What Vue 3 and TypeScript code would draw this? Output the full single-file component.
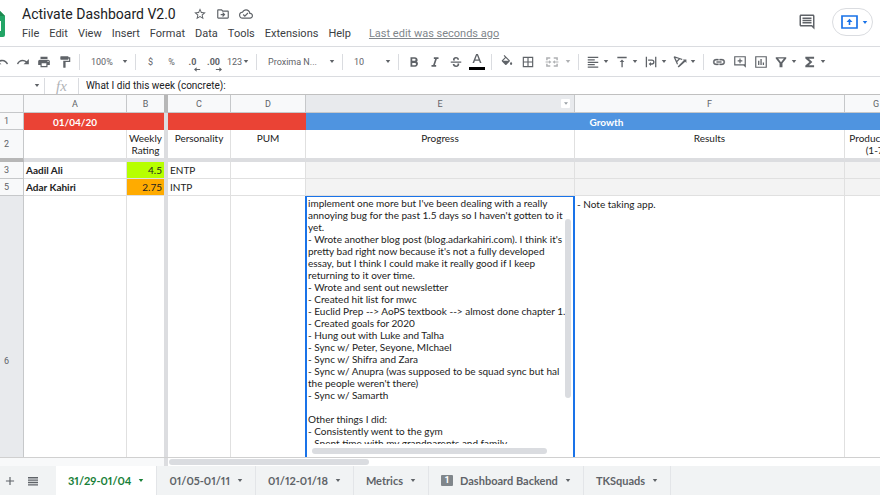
<script setup lang="ts">
import { ref } from 'vue'

interface SheetTab {
  name: string
  active?: boolean
  comments?: number
}

const menus: string[] = ['File', 'Edit', 'View', 'Insert', 'Format', 'Data', 'Tools', 'Extensions', 'Help']

const tabs: SheetTab[] = [
  { name: '31/29-01/04', active: true },
  { name: '01/05-01/11' },
  { name: '01/12-01/18' },
  { name: 'Metrics' },
  { name: 'Dashboard Backend', comments: 1 },
  { name: 'TKSquads' },
]

const people = [
  { row: 3, name: 'Aadil Ali', rating: '4.5', tone: 'lime', personality: 'ENTP' },
  { row: 5, name: 'Adar Kahiri', rating: '2.75', tone: 'amber', personality: 'INTP' },
]

const zoom = ref('100%')
const font = ref('Proxima N...')
const size = ref('10')
const cellName = ref('')
const formula = ref('What I did this week (concrete):')

const progress = ref(
  [
    "implement one more but I've been dealing with a really",
    "annoying bug for the past 1.5 days so I haven't gotten to it",
    'yet.',
    "- Wrote another blog post (blog.adarkahiri.com). I think it's",
    "pretty bad right now because it's not a fully developed",
    'essay, but I think I could make it really good if I keep',
    'returning to it over time.',
    '- Wrote and sent out newsletter',
    '- Created hit list for mwc',
    '- Euclid Prep --> AoPS textbook --> almost done chapter 1.',
    '- Created goals for 2020',
    '- Hung out with Luke and Talha',
    '- Sync w/ Peter, Seyone, MIchael',
    '- Sync w/ Shifra and Zara',
    '- Sync w/ Anupra (was supposed to be squad sync but hal',
    "the people weren't there)",
    '- Sync w/ Samarth',
    '',
    'Other things I did:',
    '- Consistently went to the gym',
    '- Spent time with my grandparents and family.',
  ].join('\n'),
)
</script>

<template>
  <div class="app">
    <header class="top">
      <svg class="logo" viewBox="0 0 20 27" aria-hidden="true">
        <path d="M0 0h14l6 6v19a2 2 0 0 1-2 2H0z" fill="#23a566" />
        <path d="M14 0l6 6h-6z" fill="#1c8a50" />
        <path d="M2 11h14v10H2z" fill="#fff" />
        <path d="M2 13h12v2H2zM2 17h12v2H2z" fill="#23a566" />
      </svg>
      <div class="heading">
        <div class="title-row">
          <h1>Activate Dashboard V2.0</h1>
          <button class="plain" aria-label="Star">
            <svg viewBox="0 0 24 24" width="14" height="14"><path d="M22 9.24l-7.19-.62L12 2 9.19 8.63 2 9.24l5.46 4.73L5.82 21 12 17.27 18.18 21l-1.63-7.03L22 9.24zM12 15.4l-3.76 2.27 1-4.28-3.32-2.88 4.38-.38L12 6.1l1.71 4.04 4.38.38-3.32 2.88 1 4.28L12 15.4z" /></svg>
          </button>
          <button class="plain" aria-label="Move">
            <svg viewBox="0 0 24 24" width="14" height="14"><path d="M20 6h-8l-2-2H4c-1.100 0-2 .9-2 2v12c0 1.100.9 2 2 2h16c1.100 0 2-.9 2-2V8c0-1.100-.9-2-2-2zm0 12H4V6h5.200l2 2H20v10zm-8-1l4-4-4-4-1.400 1.400 1.600 1.600H8v2h4.200l-1.600 1.600z" /></svg>
          </button>
          <button class="plain" aria-label="Document status">
            <svg viewBox="0 0 24 24" width="14" height="14"><path d="M19.350 10.040A7.490 7.490 0 0 0 12 4C9.110 4 6.600 5.640 5.350 8.040A5.994 5.994 0 0 0 0 14c0 3.310 2.690 6 6 6h13c2.760 0 5-2.240 5-5 0-2.640-2.050-4.780-4.650-4.960zM19 18H6c-2.210 0-4-1.790-4-4 0-2.050 1.530-3.760 3.560-3.970l1.070-.11.5-.95A5.469 5.469 0 0 1 12 6c2.620 0 4.880 1.860 5.390 4.430l.3 1.500 1.530.11A2.980 2.980 0 0 1 22 15c0 1.650-1.350 3-3 3zm-9-3.820l-2.090-2.090L6.500 13.500 10 17l6.010-6.010-1.410-1.410z" /></svg>
          </button>
        </div>
        <nav class="menus" aria-label="Menu bar">
          <button v-for="m in menus" :key="m" class="plain menu">{{ m }}</button>
          <a class="last-edit" href="#">Last edit was seconds ago</a>
        </nav>
      </div>
      <button class="plain comments" aria-label="Comments">
        <svg viewBox="0 0 24 24" width="18" height="18"><path d="M21.990 4c0-1.100-.89-2-1.990-2H4c-1.100 0-2 .9-2 2v12c0 1.100.9 2 2 2h14l4 4-.010-18zM20 4v13.170L18.830 16H4V4h16zM6 12h12v2H6zm0-3h12v2H6zm0-3h12v2H6z" /></svg>
      </button>
      <button class="present" aria-label="Present">
        <svg viewBox="0 0 17 14" width="17" height="14"><path d="M1 1h15v12H1z" fill="none" stroke="#1a73e8" stroke-width="1.700" /><path d="M8.500 3.800l3 3.200H9.300v3H7.700V7H5.500z" /></svg>
        <svg class="caret" viewBox="0 0 6 4"><path d="M0 0h6L3 4z" /></svg>
      </button>
    </header>

    <div class="toolbar" role="toolbar" aria-label="Formatting">
      <button class="tool" aria-label="Undo"><svg viewBox="0 0 24 24"><path d="M12.500 8c-2.650 0-5.050.99-6.900 2.600L2 7v9h9l-3.620-3.620A7.960 7.960 0 0 1 12.500 10.500c3.540 0 6.550 2.310 7.600 5.500l2.370-.78C21.080 11.030 17.150 8 12.500 8z" /></svg></button>
      <button class="tool" aria-label="Redo"><svg viewBox="0 0 24 24"><path d="M18.400 10.600A10.450 10.450 0 0 0 11.500 8c-4.650 0-8.580 3.030-9.960 7.220L3.900 16a8 8 0 0 1 7.600-5.500c1.950 0 3.730.72 5.120 1.880L13 16h9V7z" /></svg></button>
      <button class="tool" aria-label="Print"><svg viewBox="0 0 24 24"><path d="M19 8H5c-1.660 0-3 1.340-3 3v6h4v4h12v-4h4v-6c0-1.660-1.340-3-3-3zm-3 11H8v-5h8zm3-7a1 1 0 1 1 0-2 1 1 0 0 1 0 2zM18 3H6v4h12z" /></svg></button>
      <button class="tool" aria-label="Paint format"><svg viewBox="0 0 24 24"><path d="M18 4V3c0-.55-.45-1-1-1H5c-.55 0-1 .45-1 1v4c0 .55.45 1 1 1h12c.55 0 1-.45 1-1V6h1v4H9v11c0 .55.45 1 1 1h2c.55 0 1-.45 1-1v-9h8V4z" /></svg></button>
      <span class="sep"></span>
      <div class="picker">
        <select v-model="zoom" aria-label="Zoom"><option>100%</option></select>
        <svg class="caret" viewBox="0 0 6 4"><path d="M0 0h6L3 4z" /></svg>
      </div>
      <span class="sep"></span>
      <button class="tool" aria-label="Currency">$</button>
      <button class="tool" aria-label="Percent">%</button>
      <button class="tool decimal" aria-label="Decrease decimal places">.0<svg viewBox="0 0 8 5"><path d="M0 2.500L3 0v2h4v1H3v2z" /></svg></button>
      <button class="tool decimal" aria-label="Increase decimal places">.00<svg viewBox="0 0 8 5"><path d="M8 2.500L5 0v2H1v1h4v2z" /></svg></button>
      <button class="tool formats">123<svg class="caret" viewBox="0 0 6 4"><path d="M0 0h6L3 4z" /></svg></button>
      <span class="sep"></span>
      <div class="picker font">
        <select v-model="font" aria-label="Font"><option>Proxima N...</option></select>
        <svg class="caret" viewBox="0 0 6 4"><path d="M0 0h6L3 4z" /></svg>
      </div>
      <span class="sep"></span>
      <div class="picker">
        <select v-model="size" aria-label="Font size"><option>10</option></select>
        <svg class="caret" viewBox="0 0 6 4"><path d="M0 0h6L3 4z" /></svg>
      </div>
      <span class="sep"></span>
      <button class="tool" aria-label="Bold"><svg viewBox="0 0 24 24"><path d="M16.600 11.790c.97-.67 1.650-1.770 1.650-2.790 0-2.760-2.140-5-4.900-5H6v16h8.040c2.590 0 4.710-2.240 4.710-4.900 0-1.930-1.140-3.580-2.150-3.310zM9 6.500h4a1.750 1.750 0 0 1 0 3.500H9zm4.500 11H9v-4h4.500a2 2 0 0 1 0 4z" /></svg></button>
      <button class="tool" aria-label="Italic"><svg viewBox="0 0 24 24"><path d="M10 4v3h2.210l-3.420 10H6v3h8v-3h-2.210l3.420-10H18V4z" /></svg></button>
      <button class="tool" aria-label="Strikethrough"><svg viewBox="0 0 24 24"><path d="M3 11h18v2.200H3zM7 9.500C6 6 8.500 3.500 12 3.500c3 0 5 1.500 5.300 4.500h-2.900c-.2-1.400-1-2-2.400-2-2 0-3 1.600-1.600 3.500zM14.500 14.500h2.900c.8 3.500-1.700 6-5.300 6-3.300 0-5.600-1.700-5.700-5h2.900c.2 1.600 1.200 2.500 2.800 2.500 1.800 0 3-1.200 2.400-3.500z" /></svg></button>
      <button class="tool" aria-label="Text color"><svg class="tall" viewBox="0 0 16 18"><path d="M7.100 1L3.500 10h1.600l.8-2.200h4.200l.8 2.200h1.600L8.900 1zM6.400 6.400L8 2.200l1.600 4.200z" /><path d="M0 14h16v3H0z" fill="#000" /></svg></button>
      <span class="sep"></span>
      <button class="tool" aria-label="Fill color"><svg viewBox="0 0 24 24"><path d="M16.560 8.940L7.620 0 6.210 1.410l2.380 2.380-5.150 5.150a1.490 1.490 0 0 0 0 2.120l5.500 5.500c.29.29.68.44 1.060.44s.77-.15 1.060-.44l5.500-5.500c.59-.58.59-1.530 0-2.120zM5.210 10L10 5.210 14.790 10zM19 11.500s-2 2.170-2 3.500a2 2 0 0 0 4 0c0-1.330-2-3.500-2-3.500z" /></svg></button>
      <button class="tool" aria-label="Borders"><svg viewBox="0 0 24 24"><path d="M3 3v18h18V3zm8 16H5v-6h6zm0-8H5V5h6zm8 8h-6v-6h6zm0-8h-6V5h6z" /></svg></button>
      <button class="tool merge" aria-label="Merge cells" disabled><svg viewBox="0 0 24 24"><path d="M2 4h7v2.500H4.500V9H2zM15 4h7v5h-2.500V6.500H15zM2 15h2.500v2.500H9V20H2zM19.500 15H22v5h-7v-2.500h4.500zM1 11h6V9l4 3-4 3v-2H1zM23 11h-6V9l-4 3 4 3v-2h6z" /></svg><svg class="caret" viewBox="0 0 6 4"><path d="M0 0h6L3 4z" /></svg></button>
      <span class="sep"></span>
      <button class="tool split" aria-label="Horizontal align"><svg viewBox="0 0 24 24"><path d="M3 3h18v2.200H3zM3 7.200h12v2.200H3zM3 11.400h18v2.200H3zM3 15.500h12v2.200H3zM3 19.500h18v2.200H3z" /></svg><svg class="caret" viewBox="0 0 6 4"><path d="M0 0h6L3 4z" /></svg></button>
      <button class="tool split" aria-label="Vertical align"><svg viewBox="0 0 24 24"><path d="M4 3h16v2.500H4zM8 12h3v9h2.300v-9H16l-4-4.500z" /></svg><svg class="caret" viewBox="0 0 6 4"><path d="M0 0h6L3 4z" /></svg></button>
      <button class="tool split" aria-label="Text wrapping"><svg viewBox="0 0 24 24"><path d="M3 3h2.200v18H3zM19 3h2.200v18H19zM7 7.500h6.500a4.500 4.500 0 0 1 0 9h-1.500V19l-4-3.500 4-3.500v2.300h1.500a2.300 2.300 0 0 0 0-4.600H7z" /></svg><svg class="caret" viewBox="0 0 6 4"><path d="M0 0h6L3 4z" /></svg></button>
      <button class="tool split" aria-label="Text rotation"><svg viewBox="0 0 24 24"><path d="M1 3.500L2.500 2l14 5-1.600 1.500-3-1.200-4.600 4.600L8.500 15 7 16.500zM4.200 5.100l2.200 4.700 3.300-3.300zM8 19.500L18.500 9 17 7.500h6v6L21 11.500 9.800 21.500z" /></svg><svg class="caret" viewBox="0 0 6 4"><path d="M0 0h6L3 4z" /></svg></button>
      <span class="sep"></span>
      <button class="tool" aria-label="Insert link"><svg viewBox="0 0 24 24"><path d="M3.900 12A3.100 3.100 0 0 1 7 8.900h4V7H7a5 5 0 0 0 0 10h4v-1.900H7A3.100 3.100 0 0 1 3.900 12zM8 13h8v-2H8zm9-6h-4v1.900h4a3.100 3.100 0 0 1 0 6.200h-4V17h4a5 5 0 0 0 0-10z" stroke="#5f6368" stroke-width=".6" /></svg></button>
      <button class="tool" aria-label="Insert comment"><svg viewBox="0 0 24 24"><path d="M22 2H2v16h16l4 4zM4 4h16v12H4zM11 6h2v3h3v2h-3v3h-2v-3H8V9h3z" /></svg></button>
      <button class="tool" aria-label="Insert chart"><svg viewBox="0 0 24 24"><path d="M2 2v20h20V2zm18 18H4V4h16zM7 10h2.200v7H7zM11 7h2.200v10H11zM15 13h2.200v4H15z" /></svg></button>
      <button class="tool split" aria-label="Create a filter"><svg viewBox="0 0 24 24"><path fill-rule="evenodd" d="M3 4h18v2l-6.500 8v7h-5v-7L3 6zm4 2.200l5 6.300 5-6.300z" /></svg><svg class="caret" viewBox="0 0 6 4"><path d="M0 0h6L3 4z" /></svg></button>
      <button class="tool split" aria-label="Functions"><svg viewBox="0 0 24 24"><path d="M19 3H4v3l7 6-7 6v3h15v-3.500H10l6-5.500-6-5.500h9z" /></svg><svg class="caret" viewBox="0 0 6 4"><path d="M0 0h6L3 4z" /></svg></button>
    </div>

    <div class="formula-bar">
      <input v-model="cellName" class="name-box" aria-label="Name box" />
      <svg class="caret" viewBox="0 0 6 4"><path d="M0 0h6L3 4z" /></svg>
      <span class="sep"></span>
      <label class="fx" for="formula">fx</label>
      <span class="sep"></span>
      <input id="formula" v-model="formula" class="formula" />
    </div>

    <main class="sheet">
      <table>
        <colgroup>
          <col class="w-row" /><col class="w-a" /><col class="w-b" /><col class="w-c" /><col class="w-d" /><col class="w-e" /><col class="w-f" /><col class="w-g" />
        </colgroup>
        <thead>
          <tr class="letters">
            <th></th>
            <th>A</th>
            <th class="frozen">B</th>
            <th>C</th>
            <th>D</th>
            <th class="selected">
              <span>E</span>
              <button class="col-menu" aria-label="Column E options"><svg class="caret" viewBox="0 0 6 4"><path d="M0 0h6L3 4z" /></svg></button>
            </th>
            <th>F</th>
            <th>G</th>
          </tr>
        </thead>
        <tbody>
          <tr class="banner">
            <th class="num">1</th>
            <td class="red">01/04/20</td>
            <td class="red frozen"></td>
            <td class="red" colspan="2"></td>
            <td class="blue" colspan="3">Growth</td>
          </tr>
          <tr class="labels">
            <th class="num">2</th>
            <td></td>
            <td class="frozen">Weekly Rating</td>
            <td>Personality</td>
            <td>PUM</td>
            <td>Progress</td>
            <td>Results</td>
            <td>Productivity (1-7)</td>
          </tr>
          <tr v-for="p in people" :key="p.row" class="person">
            <th class="num">{{ p.row }}</th>
            <td class="name">{{ p.name }}</td>
            <td class="frozen rating" :class="p.tone">{{ p.rating }}</td>
            <td>{{ p.personality }}</td>
            <td></td>
            <td class="muted"></td>
            <td class="muted"></td>
            <td class="muted"></td>
          </tr>
          <tr class="entry">
            <th class="num selected">6</th>
            <td></td>
            <td class="frozen"></td>
            <td></td>
            <td></td>
            <td class="editing">
              <div class="editor">
                <textarea v-model="progress" aria-label="Progress" spellcheck="false"></textarea>
                <div class="track-y"><i class="thumb"></i></div>
                <div class="track-x"><i class="thumb"></i></div>
              </div>
            </td>
            <td>- Note taking app.</td>
            <td></td>
          </tr>
        </tbody>
      </table>
    </main>

    <div class="scroll-strip">
      <span class="gutter"></span>
      <span class="lane"><i class="thumb"></i></span>
    </div>

    <footer class="tabs">
      <button class="plain sheet-tool" aria-label="Add sheet"><svg viewBox="0 0 24 24" width="14" height="14"><path d="M19 13h-6v6h-2v-6H5v-2h6V5h2v6h6z" /></svg></button>
      <button class="plain sheet-tool list" aria-label="All sheets"><svg viewBox="0 0 10 10" width="10" height="10"><path d="M0 1h10v1.400H0zM0 3.400h10v1.400H0zM0 5.800h10v1.400H0zM0 8.200h10v1.400H0z" /></svg></button>
      <button v-for="t in tabs" :key="t.name" class="plain tab" :class="{ active: t.active }">
        <span v-if="t.comments" class="badge">{{ t.comments }}</span>
        <span>{{ t.name }}</span>
        <svg class="caret" viewBox="0 0 6 4"><path d="M0 0h6L3 4z" /></svg>
      </button>
    </footer>
  </div>
</template>

<style>
body {
  margin: 0;
}
</style>

<style scoped>
* {
  box-sizing: border-box;
}
.app {
  height: 100vh;
  display: flex;
  flex-direction: column;
  overflow: hidden;
  background: #fff;
  color: #3c4043;
  font: 11px/14px Roboto, "Liberation Sans", sans-serif;
}
button,
input,
select,
textarea {
  margin: 0;
  padding: 0;
  border: 0;
  background: none;
  color: inherit;
  font: inherit;
  outline: 0;
}
svg {
  display: block;
  flex: none;
  fill: #5f6368;
}
.caret {
  width: 6px;
  height: 3px;
}
.plain {
  display: flex;
  align-items: center;
}

.top {
  flex: none;
  display: flex;
  align-items: flex-start;
  height: 47px;
  padding-right: 7px;
  border-bottom: 1px solid #dadce0;
}
.logo {
  width: 20px;
  height: 27px;
  margin: 10px 17px 0 -15px;
}
.heading {
  flex: 1;
  padding-top: 5px;
}
.title-row {
  display: flex;
  align-items: center;
  gap: 9px;
  height: 18px;
}
h1 {
  margin: 0 8px 0 0;
  color: #202124;
  font: 400 14px/18px Roboto, "Liberation Sans", sans-serif;
}
.menus {
  display: flex;
  align-items: center;
  gap: 10px;
  height: 22px;
}
.last-edit {
  margin-left: 8px;
  color: #80868b;
}
.comments {
  margin: 13px 16px 0 0;
}
.present {
  display: flex;
  align-items: center;
  justify-content: center;
  gap: 4px;
  width: 41px;
  height: 28px;
  margin-top: 8px;
  padding-left: 4px;
  border: 1px solid #dadce0;
  border-radius: 14px;
}
.present svg {
  fill: #1a73e8;
}

.toolbar {
  flex: none;
  display: flex;
  align-items: center;
  height: 30px;
  margin-left: -9px;
  border-bottom: 1px solid #dadce0;
  color: #5f6368;
  font-size: 9px;
}
.sep {
  flex: none;
  width: 1px;
  height: 16px;
  margin: 0 4px;
  background: #dadce0;
}
.tool {
  flex: none;
  display: flex;
  align-items: center;
  justify-content: center;
  width: 21px;
  height: 24px;
}
.tool svg:not(.caret) {
  width: 14px;
  height: 14px;
}
.tool svg.tall {
  width: 16px;
  height: 18px;
}
.decimal {
  position: relative;
  font-weight: 700;
}
.tool.decimal svg {
  position: absolute;
  right: 2px;
  bottom: 2px;
  width: 7px;
  height: 5px;
}
.formats {
  width: 28px;
  gap: 1px;
}
.split {
  width: 29px;
  gap: 3px;
}
.merge {
  width: 36px;
  gap: 6px;
  padding-left: 4px;
  opacity: 0.5;
}
.picker {
  flex: none;
  display: flex;
  align-items: center;
  width: 47px;
  padding: 0 3px 0 7px;
}
.picker select {
  flex: 1;
  min-width: 0;
  appearance: none;
}
.picker.font {
  width: 77px;
}

.formula-bar {
  flex: none;
  display: flex;
  align-items: center;
  height: 18px;
  border-bottom: 1px solid #c0c0c0;
}
.name-box {
  width: 34px;
}
.fx {
  width: 25px;
  text-align: center;
  color: #b0b3b7;
  font: italic 15px/16px "Liberation Serif", serif;
}
.formula {
  flex: 1;
  padding-left: 3px;
  color: #202124;
  font-size: 10px;
}

.sheet {
  flex: 1;
  min-height: 0;
  overflow: hidden;
  border-bottom: 1px solid #d0d0d0;
  color: #222;
  font: 10px/12px Lato, "Liberation Sans", sans-serif;
}
table {
  width: 908px;
  table-layout: fixed;
  border-collapse: separate;
  border-spacing: 0;
}
.w-row { width: 24px; }
.w-a { width: 103px; }
.w-b { width: 41px; }
.w-c { width: 63px; }
.w-d { width: 75px; }
.w-e { width: 269px; }
.w-f { width: 270px; }
.w-g { width: 63px; }
th,
td {
  padding: 0 2px;
  border: 0 solid #e0e0e0;
  border-width: 0 1px 1px 0;
  font-weight: 400;
  vertical-align: top;
}
thead th,
.num {
  border-color: #c6c8ca;
  background: #f8f9fa;
  color: #5f6368;
  font: 9px/12px Roboto, "Liberation Sans", sans-serif;
  vertical-align: middle;
  text-align: center;
}
.num {
  padding-right: 12px;
}
.frozen {
  border-right: 4px solid #dcdde0;
}
thead .frozen {
  border-right-color: #b7b7b7;
}
.letters {
  height: 18px;
}
.letters th {
  position: relative;
}
thead .selected,
.num.selected {
  background: #e8eaed;
}
.col-menu {
  position: absolute;
  top: 4px;
  right: 4px;
  display: flex;
  align-items: center;
  justify-content: center;
  width: 9px;
  height: 9px;
  border-radius: 1px;
  background: #fff;
}
.col-menu .caret {
  width: 4px;
  fill: #9aa0a6;
}
.banner {
  height: 17px;
}
.banner td {
  border-bottom: 0;
  color: #fff;
  font-weight: 700;
  vertical-align: middle;
  text-align: center;
}
.red {
  border-right-color: #ea4335;
  background: #ea4335;
}
.red.frozen {
  border-right-color: #dcdde0;
}
.blue {
  background: #4f94e0;
}
.labels {
  height: 32px;
}
.labels > * {
  border-bottom: 4px solid #dcdde0;
  text-align: center;
}
.labels td {
  padding-top: 2px;
}
.labels .num {
  border-bottom-color: #b7b7b7;
}
.person {
  height: 17px;
}
.person td {
  vertical-align: middle;
}
.person .name {
  font-weight: 700;
}
.person .rating {
  text-align: right;
}
.lime {
  background: #b7ff00;
}
.amber {
  background: #ffab00;
}
.muted {
  background: #f3f3f3;
}
.entry {
  height: 330px;
}
.entry td {
  padding-top: 2px;
}
.editing {
  position: relative;
}
.editor {
  position: absolute;
  inset: 0 -1px auto -1px;
  display: grid;
  grid-template: 247px 14px / 1fr 8px;
  border: 2px solid #1a73e8;
  border-top-width: 1px;
  background: #fff;
}
textarea {
  display: block;
  width: 100%;
  height: 100%;
  padding: 0 0 0 1px;
  overflow: hidden;
  resize: none;
  white-space: pre;
}
.thumb {
  display: block;
  border-radius: 3px;
  background: #dadce0;
}
.track-y {
  padding: 22px 2px 46px 0;
}
.track-y .thumb {
  height: 100%;
}
.track-x {
  padding: 4px 18px 4px 5px;
}
.track-x .thumb {
  height: 6px;
}

.scroll-strip {
  flex: none;
  display: flex;
  height: 8px;
}
.gutter {
  width: 168px;
  border-right: 4px solid #dcdde0;
  background: #f8f9fa;
}
.lane {
  flex: 1;
  padding: 1px 0 0 1px;
}
.lane .thumb {
  width: 200px;
  height: 6px;
}

.tabs {
  flex: none;
  display: flex;
  height: 29px;
  background: #f1f3f4;
  color: #5f6368;
}
.sheet-tool {
  justify-content: center;
  width: 20px;
}
.sheet-tool.list {
  width: 26px;
  margin-right: 10px;
}
.tab {
  gap: 7px;
  padding: 0 12px;
  border-right: 1px solid #e3e5e8;
  font: 700 11px/14px Lato, "Liberation Sans", sans-serif;
  font-variant-numeric: proportional-nums;
}
.tab.active {
  background: #fff;
  color: #188038;
}
.tab.active .caret {
  fill: #188038;
}
.badge {
  width: 12px;
  height: 11px;
  border-radius: 1px;
  background: #80868b;
  color: #fff;
  font: 700 9px/11px Roboto, "Liberation Sans", sans-serif;
  text-align: center;
}
</style>
